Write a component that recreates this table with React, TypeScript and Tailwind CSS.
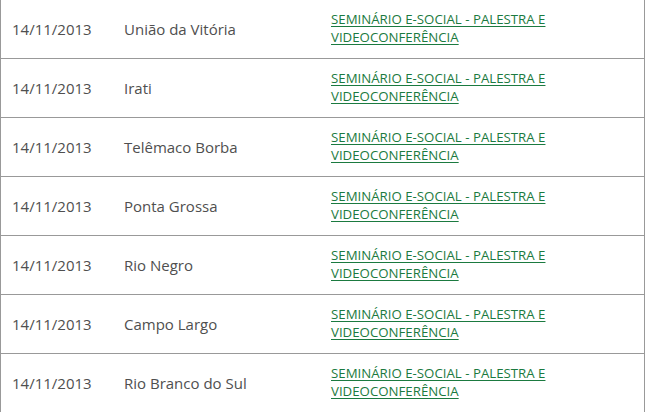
const rows = [
  { date: '14/11/2013', city: 'União da Vitória' },
  { date: '14/11/2013', city: 'Irati' },
  { date: '14/11/2013', city: 'Telêmaco Borba' },
  { date: '14/11/2013', city: 'Ponta Grossa' },
  { date: '14/11/2013', city: 'Rio Negro' },
  { date: '14/11/2013', city: 'Campo Largo' },
  { date: '14/11/2013', city: 'Rio Branco do Sul' },
];

export default function App() {
  return (
    <div className="w-[646px] h-[412px] overflow-hidden bg-white" style={{ fontFamily: '"Open Sans", "Liberation Sans", sans-serif' }}>
      <div className="w-[645px] border-x border-[#999]">
        {rows.map((row, idx) => (
          <div
            key={idx}
            className="grid grid-cols-[123px_207px_1fr] items-center h-[59px] border-b border-[#999] text-[15px] text-[#4f4f4f]"
          >
            <span className="pl-[11px]">{row.date}</span>
            <span>{row.city}</span>
            <a href="#" className="max-w-[232px] text-[13.25px] leading-[18px] text-[#1b7a40] underline underline-offset-2 -mt-[2px]">
              SEMINÁRIO E-SOCIAL - PALESTRA E VIDEOCONFERÊNCIA
            </a>
          </div>
        ))}
      </div>
    </div>
  );
}
